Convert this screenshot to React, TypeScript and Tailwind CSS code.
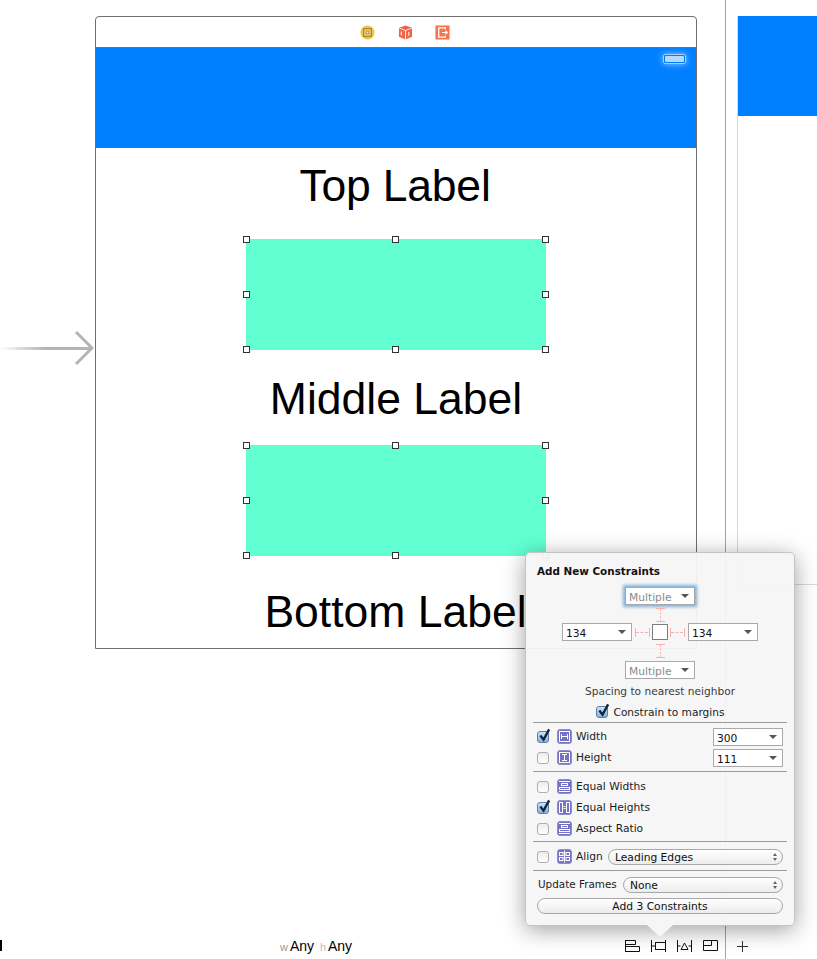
import React from "react";

const ui = "font-['DejaVu_Sans',sans-serif]";

function Handle({ hidden }: { hidden?: boolean }) {
  return <div className={`w-[7px] h-[7px] box-border ${hidden ? "" : "bg-white border border-[#333]"}`} />;
}

function GreenBox({ top }: { top: string }) {
  return (
    <div className={`absolute left-[150px] w-[300px] h-[111px] bg-[#62ffd2] ${top}`}>
      <div className="absolute -left-[3px] -right-[3px] -top-[3px] -bottom-[3px] flex flex-col justify-between">
        {[0, 1, 2].map((r) => (
          <div key={r} className="flex justify-between">
            <Handle />
            <div className="-ml-[2px]">
              <Handle hidden={r === 1} />
            </div>
            <Handle />
          </div>
        ))}
      </div>
    </div>
  );
}

function Check({ on }: { on?: boolean }) {
  return (
    <div
      className={`relative w-[12px] h-[12px] rounded-[3px] border shrink-0 ${
        on
          ? "border-[#5a7fa8] bg-gradient-to-b from-[#cfe2f5] to-[#86b2de]"
          : "border-[#aeaeae] bg-gradient-to-b from-[#ececec] to-[#ffffff]"
      }`}
    >
      {on && (
        <svg viewBox="0 0 14 14" className="absolute -top-[4px] left-0 w-[13px] h-[14px]">
          <path d="M2.5 7.5 L6 12 L12 1" fill="none" stroke="#12243f" strokeWidth="2.5" />
        </svg>
      )}
    </div>
  );
}

function Glyph({ children }: { children: React.ReactNode }) {
  return (
    <svg viewBox="0 0 15 15" className="w-[15px] h-[15px] shrink-0">
      <rect x="0.5" y="0.5" width="14" height="14" rx="2.5" fill="#7472c2" stroke="#8f8dd2" />
      <g fill="none" stroke="#fff" strokeWidth="1">
        {children}
      </g>
    </svg>
  );
}

const gWidth = (
  <>
    <rect x="2.5" y="2.5" width="10" height="10" />
    <path d="M4.5 5v5M10.5 5v5M4.5 7.5h6" />
  </>
);
const gHeight = (
  <>
    <rect x="2.5" y="2.5" width="10" height="10" />
    <path d="M5 4.5h5M5 10.5h5M7.5 4.5v6" />
  </>
);
const gEqW = (
  <>
    <path d="M2 2.5h11M2 12.5h11" />
    <rect x="4.5" y="4.5" width="6" height="2" />
    <rect x="2.5" y="8.5" width="10" height="2" />
  </>
);
const gEqH = (
  <>
    <rect x="2.5" y="2.5" width="3" height="10" />
    <rect x="9.5" y="2.5" width="3" height="10" />
    <path d="M6.5 6.5h2M6.5 8.5h2" />
  </>
);
const gAlign = (
  <>
    <path d="M7.5 1.5v12" />
    <rect x="2.5" y="3.5" width="3.5" height="3" />
    <rect x="9" y="3.5" width="3.5" height="3" />
    <rect x="2.5" y="8.5" width="3.5" height="3" />
    <rect x="9" y="8.5" width="3.5" height="3" />
  </>
);

function Drop({ value, muted, className }: { value: string; muted?: boolean; className?: string }) {
  return (
    <div
      className={`w-[70px] h-[18px] border border-[#a9a9a9] bg-white flex items-center justify-between pl-[3px] pr-[5px] text-[10.7px] ${
        muted ? "text-[#8a8a8a]" : "text-[#111]"
      } ${className ?? ""}`}
    >
      <span className="pt-[4px] leading-[12px]">{value}</span>
      <div className="w-0 h-0 border-l-[4px] border-r-[4px] border-t-[4px] border-l-transparent border-r-transparent border-t-[#555]" />
    </div>
  );
}

function Pop({ value, className }: { value: string; className: string }) {
  return (
    <div
      className={`h-[16px] rounded-full border border-[#a8a8a8] bg-gradient-to-b from-white to-[#ececec] flex items-center justify-between pl-[6px] pr-[5px] text-[10.7px] text-[#111] ${className}`}
    >
      <span className="pt-[2px] leading-[12px]">{value}</span>
      <div className="flex flex-col gap-[2px]">
        <div className="w-0 h-0 border-l-[2.5px] border-r-[2.5px] border-b-[3px] border-l-transparent border-r-transparent border-b-[#666]" />
        <div className="w-0 h-0 border-l-[2.5px] border-r-[2.5px] border-t-[3px] border-l-transparent border-r-transparent border-t-[#666]" />
      </div>
    </div>
  );
}

function Spacer({ vertical }: { vertical?: boolean }) {
  return vertical ? (
    <svg viewBox="0 0 9 14" className="block w-[9px] h-[14px]">
      <path d="M0 .5h9M0 13.5h9" stroke="#f7b3aa" fill="none" />
      <path d="M4.5 1v12" stroke="#f7b3aa" strokeDasharray="2 1.5" fill="none" />
    </svg>
  ) : (
    <svg viewBox="0 0 15 9" className="block w-[15px] h-[9px]">
      <path d="M.5 0v9M14.5 0v9" stroke="#f7b3aa" fill="none" />
      <path d="M1 4.5h13" stroke="#f7b3aa" strokeDasharray="3 1.5" fill="none" />
    </svg>
  );
}

function Rule({ className }: { className?: string }) {
  return <div className={`h-px mx-[7px] bg-[#9b9b9b] shrink-0 ${className ?? ""}`} />;
}

function CRow({ on, g, label }: { on?: boolean; g: React.ReactNode; label: string }) {
  return (
    <div className="flex items-center h-[21px] pl-[11px]">
      <Check on={on} />
      <div className="w-[8px] shrink-0" />
      <Glyph>{g}</Glyph>
      <span className="ml-[4px] pt-[2px] text-[10.7px] text-[#1c1c1c]">{label}</span>
    </div>
  );
}

function Popover() {
  return (
    <div
      className={`absolute left-[525px] top-[552px] w-[270px] h-[374px] rounded-[5px] bg-[#f6f6f6]/95 border border-[#c4c4c4] shadow-[0_4px_22px_rgba(0,0,0,0.38)] flex flex-col ${ui}`}
    >
      <div className="pl-[11px] pt-[11px] h-[34px] text-[10.4px] leading-[14px] font-bold text-[#111] shrink-0">
        Add New Constraints
      </div>
      <div className="flex justify-center">
        <Drop value="Multiple" muted className="border-[#6aa0cf] shadow-[0_0_3px_2px_#7fb0d8]" />
      </div>
      <div className="flex justify-center mt-[3px]">
        <Spacer vertical />
      </div>
      <div className="flex items-center justify-center h-[18px] mt-[1px]">
        <Drop value="134" />
        <div className="w-[3px]" />
        <Spacer />
        <div className="w-[16px] h-[16px] mx-[2px] border border-[#7d7d7d] bg-white" />
        <Spacer />
        <div className="w-[3px]" />
        <Drop value="134" />
      </div>
      <div className="flex justify-center mt-[3px]">
        <Spacer vertical />
      </div>
      <div className="flex justify-center mt-[3px]">
        <Drop value="Multiple" muted />
      </div>
      <div className="text-center text-[10.6px] leading-[14px] mt-[5px] text-[#3c3c3c]">
        Spacing to nearest neighbor
      </div>
      <div className="flex items-center justify-center gap-[5px] h-[14px] mt-[7px] ml-[1px]">
        <Check on />
        <span className="text-[10.6px] text-[#1c1c1c] pt-[1px]">Constrain to margins</span>
      </div>
      <Rule className="mt-[3px]" />
      <div className="flex flex-col mt-[3px] relative">
        <CRow on g={gWidth} label="Width" />
        <CRow g={gHeight} label="Height" />
        <Drop value="300" className="absolute left-[187px] top-[2px]" />
        <Drop value="111" className="absolute left-[187px] top-[23px]" />
      </div>
      <Rule className="mt-[3px]" />
      <div className="flex flex-col mt-[4px]">
        <CRow g={gEqW} label="Equal Widths" />
        <CRow on g={gEqH} label="Equal Heights" />
        <CRow g={gEqW} label="Aspect Ratio" />
      </div>
      <Rule className="mt-[2px]" />
      <div className="flex items-center h-[28px] pl-[11px] pt-[1px] box-border shrink-0">
        <Check />
        <div className="w-[8px] shrink-0" />
        <Glyph>{gAlign}</Glyph>
        <span className="ml-[4px] pt-[1px] text-[10.7px] text-[#1c1c1c]">Align</span>
        <Pop value="Leading Edges" className="ml-auto mr-[11px] w-[175px]" />
      </div>
      <Rule />
      <div className="flex items-center h-[26px] pl-[12px] pt-[1px] box-border shrink-0">
        <span className="text-[10.4px] text-[#1c1c1c] pt-[1px]">Update Frames</span>
        <Pop value="None" className="ml-auto mr-[11px] w-[160px]" />
      </div>
      <div className="pl-[11px] mt-[1px]">
        <div className="w-[246px] h-[16px] rounded-full border border-[#a8a8a8] bg-gradient-to-b from-white to-[#ececec] flex items-center justify-center text-[10.7px] text-[#111]">
          <span className="pt-[2px] leading-[12px]">Add 3 Constraints</span>
        </div>
      </div>
      <svg viewBox="0 0 26 12" className="absolute left-[121px] -bottom-[12px] w-[26px] h-[12px]">
        <path d="M0 0 L13 12 L26 0 Z" fill="#f6f6f6" />
      </svg>
    </div>
  );
}

function Device() {
  return (
    <div className="absolute left-[95px] top-[16px] w-[602px] h-[633px] border border-[#6f6f6f] rounded-t-[4px] bg-white flex flex-col font-['Liberation_Sans',sans-serif]">
      <div className="h-[30px] flex items-center justify-center gap-[22.5px] shrink-0 border-b border-[#6f6f6f] box-content pl-[18px]">
        <svg viewBox="0 0 16 16" className="w-[15px] h-[15px]">
          <circle cx="8" cy="8" r="7.5" fill="#f5c342" />
          <rect x="4" y="4" width="8" height="8" fill="#e9d48a" stroke="#96741f" />
          <rect x="6.5" y="6.5" width="3" height="3" fill="#f8eec4" stroke="#96741f" strokeWidth=".7" />
        </svg>
        <svg viewBox="0 0 16 16" className="w-[15px] h-[15px]">
          <path d="M8 .5 L15 3 V12.5 L8 15.5 L1 12.5 V3 Z" fill="#f0654a" />
          <path d="M1 3 L8 6 L15 3 M8 6 V15.5" stroke="#fff" fill="none" strokeWidth=".9" />
          <path d="M3.5 7v4M11.5 7.5v4" stroke="#fff" strokeWidth="1.1" />
        </svg>
        <svg viewBox="0 0 16 16" className="w-[15px] h-[15px]">
          <rect x=".5" y=".5" width="15" height="15" fill="#f6734c" />
          <path d="M11 4.5 V3 H4 V13 H11 V11.5" stroke="#fff" fill="none" strokeWidth="1.4" />
          <path d="M7.5 8 H13 M11 6 L13.2 8 L11 10" stroke="#fff" fill="none" strokeWidth="1.2" />
        </svg>
      </div>
      <div className="relative h-[100px] shrink-0 bg-[#0080ff]">
        <div className="absolute left-[567px] top-[6px] w-[23px] h-[10px] rounded-[2px] border border-[#9fd0ff] p-[1px] shadow-[0_0_6px_rgba(255,255,255,0.6)]">
          <div className="w-full h-full bg-[#b5d9ff] rounded-[1px]" />
        </div>
      </div>
      <div className="relative flex-1 overflow-hidden">
        <GreenBox top="top-[91px]" />
        <GreenBox top="top-[297px]" />
        <div className="absolute left-0 right-[2px] top-[12px] text-center text-[44.5px] leading-[52px] text-black tracking-[-0.2px]">Top Label</div>
        <div className="absolute left-0 right-0 top-[225px] text-center text-[44.5px] leading-[52px] text-black">Middle Label</div>
        <div className="absolute left-0 right-[1px] top-[438px] text-center text-[44.5px] leading-[52px] text-black whitespace-nowrap">Bottom Label</div>
      </div>
    </div>
  );
}

function BottomIcons() {
  return (
    <div className="absolute left-[625px] top-[940px] flex items-center gap-[11px]">
      <svg viewBox="0 0 15 12" className="w-[15px] h-[12px]">
        <path d="M.5 0v12M.5 .5h10v4h-10M.5 6.5h14v5h-14" fill="none" stroke="#111" />
      </svg>
      <svg viewBox="0 0 15 12" className="w-[15px] h-[12px]">
        <path d="M.5 0v12M14.5 0v12M.5 6h4" fill="none" stroke="#111" />
        <rect x="4.5" y="2.5" width="10" height="7" fill="none" stroke="#111" />
      </svg>
      <svg viewBox="0 0 15 12" className="w-[15px] h-[12px]">
        <path d="M.5 0v12M14.5 0v12M.5 6h3M11.5 6h3" fill="none" stroke="#111" />
        <path d="M7.5 3 L11 9.5 H4 Z" fill="none" stroke="#111" />
      </svg>
      <svg viewBox="0 0 15 12" className="w-[15px] h-[12px]">
        <path d="M.5 .5h14v10h-14zM.5 5.5h8v-5" fill="none" stroke="#111" />
      </svg>
    </div>
  );
}

export default function App() {
  return (
    <div className="relative w-[817px] h-[959px] bg-white overflow-hidden">
      <div className="absolute left-[725px] top-0 w-px h-[959px] bg-[#a3a3a3]" />
      <div className="absolute left-[737px] top-[16px] w-px h-[569px] bg-[#d9d9d9]" />
      <div className="absolute left-[737px] top-[584px] w-[80px] h-px bg-[#d9d9d9]" />
      <div className="absolute left-[738px] top-[16px] w-[79px] h-[100px] bg-[#0080ff]" />

      <Device />

      <div className="absolute left-0 top-[347px] w-[91px] h-[3px] bg-gradient-to-r from-white via-[#b4b4b4] via-50% to-[#b4b4b4]" />
      <svg viewBox="0 0 20 36" className="absolute left-[74px] top-[330px] w-[20px] h-[36px]">
        <path d="M2 2 L18 18 L2 34" fill="none" stroke="#b4b4b4" strokeWidth="3" />
      </svg>

      <div className="absolute left-0 top-[940px] w-[2px] h-[11px] bg-black" />
      <div className="absolute left-[280px] top-[938px] flex items-baseline text-[14px] leading-[16px] text-black font-['Liberation_Sans',sans-serif]">
        <span className="text-[11px] text-[#999] w-[10px]">w</span>
        <span className="w-[30px]">Any</span>
        <span className="text-[11px] text-[#bbb] w-[8px]">h</span>
        <span>Any</span>
      </div>

      <BottomIcons />
      <svg viewBox="0 0 12 12" className="absolute left-[737px] top-[941px] w-[11px] h-[11px]">
        <path d="M6 0v12M0 6h12" stroke="#222" fill="none" />
      </svg>

      <Popover />
    </div>
  );
}
